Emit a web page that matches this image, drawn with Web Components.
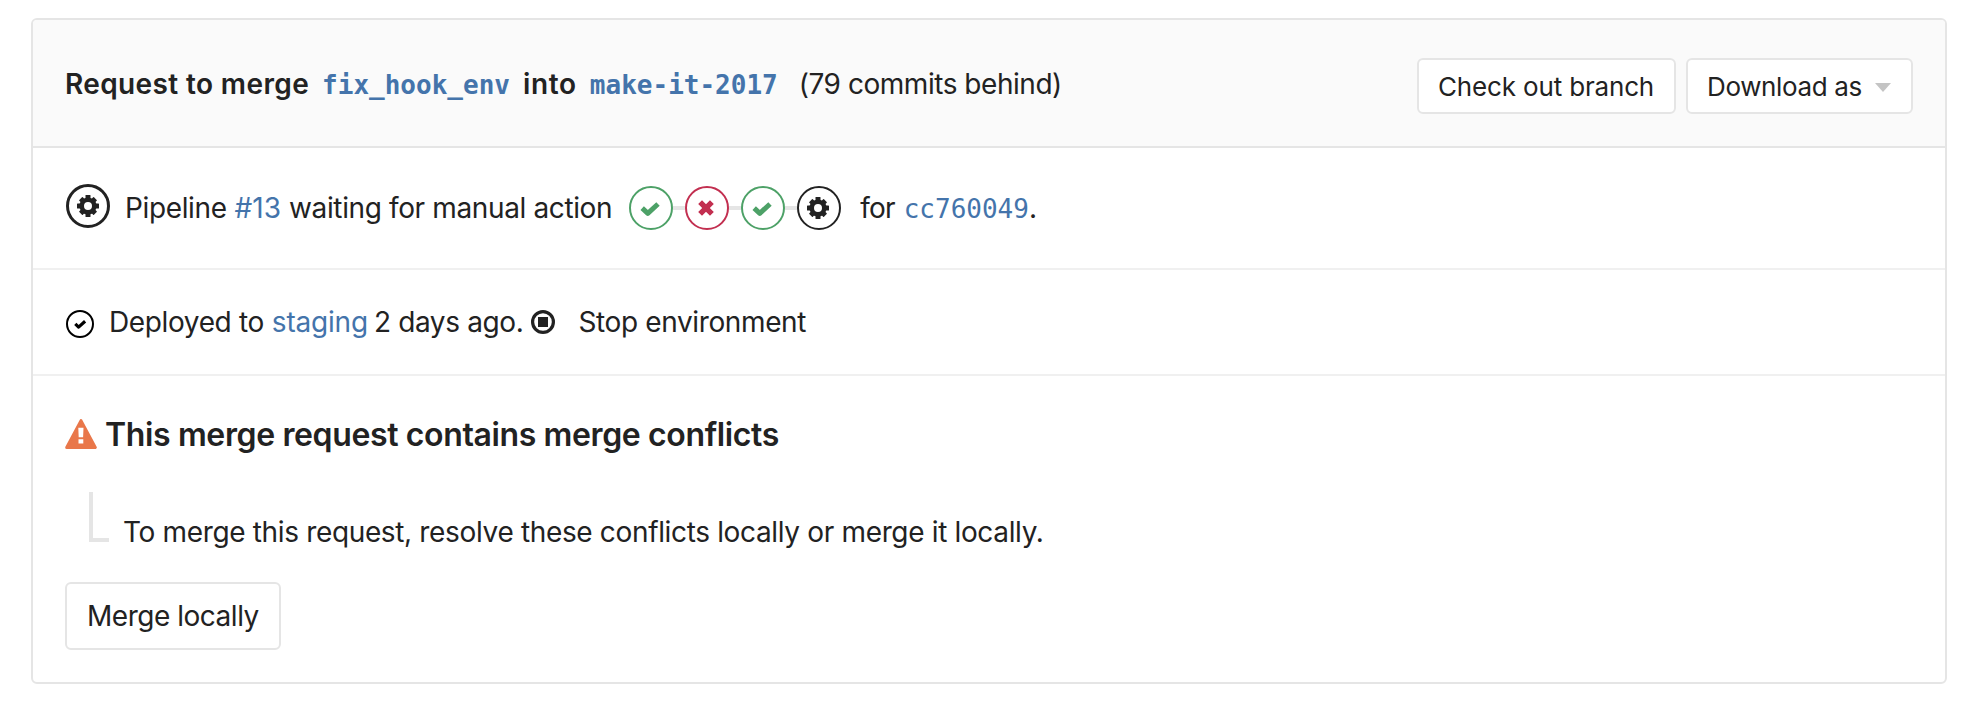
<!DOCTYPE html>
<html lang="en">
<head>
<meta charset="utf-8">
<title>Merge request</title>
<style>
    body {
        margin: 0;
        padding: 18px 29px 0 31px;
        background: #fff;
        color: #222;
        font: 28px/40px Inter, "Liberation Sans", sans-serif;
    }
</style>
</head>
<body>
<merge-request-widget>
    <widget-header slot="header"></widget-header>
    <widget-pipeline></widget-pipeline>
    <widget-deployment></widget-deployment>
    <widget-conflicts></widget-conflicts>
</merge-request-widget>

<script>
/**
 * Text styles shared by the rows of the widget.
 */
const textStyles = `
    span, a { white-space: pre; letter-spacing: -0.37px; }
    a { color: #4474ab; text-decoration: none; }
    .mono { font-family: "DejaVu Sans Mono", "Liberation Mono", monospace; font-size: 26px; letter-spacing: 0; }
`;

/**
 * Small base class: attaches the shadow root and renders into it.
 */
class WidgetElement extends HTMLElement {
    constructor() {
        super();
        this.attachShadow({ mode: 'open' });
    }

    connectedCallback() {
        this.shadowRoot.innerHTML = this.render();
    }
}

/**
 * Outer box with a header slot and stacked sections.
 */
class MergeRequestWidget extends WidgetElement {
    render() {
        return `
            <style>
                :host {
                    display: block;
                    box-sizing: border-box;
                    height: 666px;
                    border: 2px solid #e5e5e5;
                    border-radius: 6px;
                    overflow: hidden;
                }
            </style>
            <slot name="header"></slot>
            <slot></slot>
        `;
    }
}

/**
 * Status icon. Attributes: name, size.
 */
class StatusIcon extends WidgetElement {
    render() {
        const size = Number(this.getAttribute('size')) || 44;
        return `
            <style>
                :host { display: block; flex: none; width: ${size}px; height: ${size}px; }
                svg { display: block; }
            </style>
            ${this.icon(this.getAttribute('name'), size)}
        `;
    }

    gear(cx, cy) {
        const tooth = (angle, length) =>
            `<rect x="-2.5" y="${-length}" width="5" height="5" rx=".6" transform="rotate(${angle})"/>`;
        return `
            <g transform="translate(${cx} ${cy})" fill="#222">
                <circle r="6.3" fill="none" stroke="#222" stroke-width="4.6"/>
                ${[0, 90, 180, 270].map((a) => tooth(a, 11)).join('')}
                ${[45, 135, 225, 315].map((a) => tooth(a, 10.4)).join('')}
            </g>`;
    }

    icon(name, size) {
        const shapes = {
            'manual-bold': `<circle cx="22" cy="22" r="20.5" fill="none" stroke="#222" stroke-width="3"/>${this.gear(22, 22)}`,
            'manual': `<circle cx="22" cy="22" r="21" fill="none" stroke="#222" stroke-width="2"/>${this.gear(21, 22)}`,
            'success': `
                <g fill="none" stroke="#4da167">
                    <circle cx="22" cy="22" r="21" stroke-width="2"/>
                    <path d="M13.2 22.1l5.6 5.2 10.2-9.3" stroke-width="5" stroke-linejoin="round"/>
                </g>`,
            'failed': `
                <g fill="none" stroke="#c22f50">
                    <circle cx="22" cy="22" r="21" stroke-width="2"/>
                    <path d="M15.1 16.1l11.8 11.8M26.9 16.1l-11.8 11.8" stroke-width="5.4"/>
                </g>`,
            'deployed': `
                <g fill="none" stroke="#000">
                    <circle cx="14" cy="14" r="13" stroke-width="2"/>
                    <path d="M9.3 13.9l3.3 3.2 6.5-5.8" stroke-width="3.2" stroke-linejoin="round"/>
                </g>`,
            'stop': `
                <circle cx="12" cy="12" r="10.4" fill="none" stroke="#222" stroke-width="3.2"/>
                <rect x="7" y="7" width="10" height="10" fill="#222"/>`,
            'warning': `
                <path d="M16 2.6L30.3 29.4H1.7z" fill="#e9774a" stroke="#e9774a" stroke-width="3" stroke-linejoin="round"/>
                <path d="M13.3 9.8h5.2l-.4 9.4h-4.4zM13.5 21.3h4.8v4.2h-4.8z" fill="#fff"/>`,
        };
        return `<svg width="${size}" height="${size}" viewBox="0 0 ${size} ${size}">${shapes[name]}</svg>`;
    }
}

/**
 * Bordered button, with a caret when the "dropdown" attribute is set.
 */
class WidgetButton extends WidgetElement {
    render() {
        return `
            <style>
                :host {
                    display: flex;
                    align-items: center;
                    box-sizing: border-box;
                    height: 56px;
                    padding: 0 20px;
                    border: 2px solid #e5e5e5;
                    border-radius: 6px;
                    background: #fff;
                    font-size: 26px;
                    letter-spacing: -0.12px;
                    white-space: nowrap;
                }
                .caret {
                    margin-left: 13px;
                    border: 8px solid transparent;
                    border-top: 9px solid #c4c4c4;
                    border-bottom: 0;
                }
            </style>
            <slot></slot>
            ${this.hasAttribute('dropdown') ? '<i class="caret"></i>' : ''}
        `;
    }
}

/**
 * Source and target branches, with the branch actions.
 */
class WidgetHeader extends WidgetElement {
    render() {
        return `
            <style>
                ${textStyles}
                :host {
                    display: flex;
                    align-items: center;
                    justify-content: space-between;
                    height: 126px;
                    padding: 0 32px 0 32px;
                    border-bottom: 2px solid #e5e5e5;
                    background: #fafafa;
                }
                .title { display: flex; align-items: baseline; padding-top: 2px; font-weight: 600; gap: 13px; }
                .title span { letter-spacing: 0.38px; }
                .title .into { letter-spacing: 0.7px; }
                .title .behind { margin-left: 8px; font-weight: 400; letter-spacing: -0.46px; }
                .title .mono { font-weight: 700; }
                .actions { display: flex; gap: 10px; padding-top: 6px; }
                widget-button { padding: 2px 19px 0; }
                .check-out { width: 259px; letter-spacing: -0.16px; }
                .download { width: 227px; letter-spacing: -0.36px; }
            </style>
            <div class="title">
                <span>Request to merge</span>
                <a class="mono">fix_hook_env</a>
                <span class="into">into</span>
                <a class="mono">make-it-2017</a>
                <span class="behind">(79 commits behind)</span>
            </div>
            <div class="actions">
                <widget-button class="check-out">Check out branch</widget-button>
                <widget-button class="download" dropdown>Download as</widget-button>
            </div>
        `;
    }
}

/**
 * Pipeline status with its mini graph of stages.
 */
class WidgetPipeline extends WidgetElement {
    render() {
        const stages = ['success', 'failed', 'success', 'manual'];
        return `
            <style>
                ${textStyles}
                :host {
                    display: flex;
                    align-items: center;
                    height: 120px;
                    padding-left: 33px;
                    border-bottom: 2px solid #f0f0f0;
                }
                .status { margin: -4px 15px 0 0; }
                .text { display: flex; align-items: baseline; }
                .text a { margin: 0 8px 0 8px; letter-spacing: 0; }
                .stages { display: flex; align-items: center; margin: 0 19px 0 17px; }
                .link { width: 12px; height: 4px; background: #e5e5e5; }
                .commit span { letter-spacing: -0.8px; }
                .commit .mono { margin: 0 0 0 9px; }
            </style>
            <status-icon class="status" name="manual-bold"></status-icon>
            <div class="text"><span>Pipeline</span><a>#13</a><span>waiting for manual action</span></div>
            <div class="stages">
                ${stages.map((name) => `<status-icon name="${name}"></status-icon>`).join('<i class="link"></i>')}
            </div>
            <div class="text commit"><span>for</span><a class="mono">cc760049</a><span>.</span></div>
        `;
    }
}

/**
 * Environment the branch is deployed to.
 */
class WidgetDeployment extends WidgetElement {
    render() {
        return `
            <style>
                ${textStyles}
                :host {
                    display: flex;
                    align-items: center;
                    height: 104px;
                    padding-left: 33px;
                    border-bottom: 2px solid #f0f0f0;
                }
                .status { margin: 4px 15px 0 0; }
                a { margin: 0 6px 0 8px; letter-spacing: -0.2px; }
                .stop { margin: 0 23px 0 8px; }
            </style>
            <status-icon class="status" name="deployed" size="28"></status-icon>
            <span>Deployed to</span><a>staging</a><span>2 days ago.</span>
            <status-icon class="stop" name="stop" size="24"></status-icon>
            <span>Stop environment</span>
        `;
    }
}

/**
 * Merge conflict notice and the local merge action.
 */
class WidgetConflicts extends WidgetElement {
    render() {
        return `
            <style>
                ${textStyles}
                :host { display: block; padding: 39px 32px 0; }
                .title { display: flex; align-items: center; gap: 8px; font-size: 32px; font-weight: 600; }
                .title status-icon { margin-top: -2px; }
                .hint { display: flex; align-items: flex-end; margin: 37px 0 30px 24px; height: 60px; }
                .hint span { letter-spacing: -0.345px; }
                .elbow {
                    align-self: flex-start;
                    box-sizing: border-box;
                    width: 20px;
                    height: 50px;
                    margin-right: 14px;
                    border: solid #e5e5e5;
                    border-width: 0 0 4px 4px;
                }
                widget-button { width: 216px; height: 68px; font-size: 28px; letter-spacing: -0.48px; }
            </style>
            <div class="title">
                <status-icon name="warning" size="32"></status-icon>
                <span>This merge request contains merge conflicts</span>
            </div>
            <div class="hint">
                <i class="elbow"></i>
                <span>To merge this request, resolve these conflicts locally or merge it locally.</span>
            </div>
            <widget-button>Merge locally</widget-button>
        `;
    }
}

customElements.define('status-icon', StatusIcon);
customElements.define('widget-button', WidgetButton);
customElements.define('widget-header', WidgetHeader);
customElements.define('widget-pipeline', WidgetPipeline);
customElements.define('widget-deployment', WidgetDeployment);
customElements.define('widget-conflicts', WidgetConflicts);
customElements.define('merge-request-widget', MergeRequestWidget);
</script>
</body>
</html>
